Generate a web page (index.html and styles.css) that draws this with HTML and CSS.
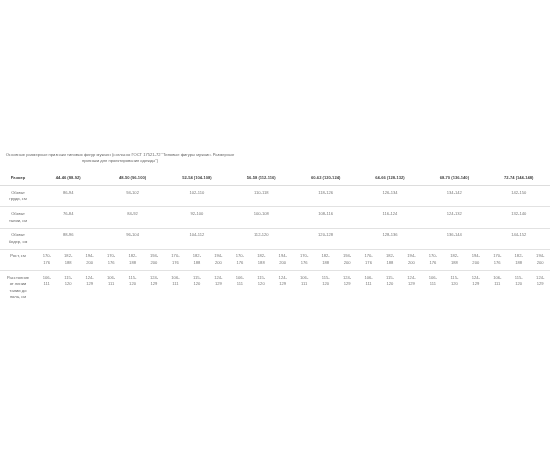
FILE: index.html
```html
<!DOCTYPE html>
<html lang="ru">
<head>
<meta charset="utf-8">
<link rel="stylesheet" href="styles.css">
</head>
<body>
<div class="page">
  <p class="caption">Основные размерные признаки типовых фигур мужчин (согласно ГОСТ 17521-72 "Типовые фигуры мужчин. Размерные<br>признаки для проектирования одежды")</p>
  <table class="sizes">
    <colgroup>
      <col class="c-label">
      <col span="24" class="c-sub">
    </colgroup>
    <thead>
      <tr>
        <th class="label">Размер</th>
        <th colspan="3">44-46 (88-92)</th>
        <th colspan="3">48-50 (96-100)</th>
        <th colspan="3">52-54 (104-108)</th>
        <th colspan="3">56-58 (112-116)</th>
        <th colspan="3">60-62 (120-124)</th>
        <th colspan="3">64-66 (128-132)</th>
        <th colspan="3">68-70 (136-140)</th>
        <th colspan="3">72-74 (144-148)</th>
      </tr>
    </thead>
    <tbody>
      <tr>
        <td class="label">Обхват<br>груди, см</td>
        <td colspan="3">86-94</td>
        <td colspan="3">94-102</td>
        <td colspan="3">102-110</td>
        <td colspan="3">110-118</td>
        <td colspan="3">118-126</td>
        <td colspan="3">126-134</td>
        <td colspan="3">134-142</td>
        <td colspan="3">142-150</td>
      </tr>
      <tr>
        <td class="label">Обхват<br>талии, см</td>
        <td colspan="3">76-84</td>
        <td colspan="3">84-92</td>
        <td colspan="3">92-100</td>
        <td colspan="3">100-108</td>
        <td colspan="3">108-116</td>
        <td colspan="3">116-124</td>
        <td colspan="3">124-132</td>
        <td colspan="3">132-140</td>
      </tr>
      <tr>
        <td class="label">Обхват<br>бедер, см</td>
        <td colspan="3">88-96</td>
        <td colspan="3">96-104</td>
        <td colspan="3">104-112</td>
        <td colspan="3">112-120</td>
        <td colspan="3">120-128</td>
        <td colspan="3">128-136</td>
        <td colspan="3">136-144</td>
        <td colspan="3">144-152</td>
      </tr>
      <tr>
        <td class="label">Рост, см</td>
        <td>170-<br>176</td><td>182-<br>188</td><td>194-<br>200</td>
        <td>170-<br>176</td><td>182-<br>188</td><td>194-<br>200</td>
        <td>170-<br>176</td><td>182-<br>188</td><td>194-<br>200</td>
        <td>170-<br>176</td><td>182-<br>188</td><td>194-<br>200</td>
        <td>170-<br>176</td><td>182-<br>188</td><td>194-<br>200</td>
        <td>170-<br>176</td><td>182-<br>188</td><td>194-<br>200</td>
        <td>170-<br>176</td><td>182-<br>188</td><td>194-<br>200</td>
        <td>170-<br>176</td><td>182-<br>188</td><td>194-<br>200</td>
      </tr>
      <tr>
        <td class="label">Расстояние<br>от линии<br>талии до<br>пола, см</td>
        <td>106-<br>111</td><td>115-<br>120</td><td>124-<br>129</td>
        <td>106-<br>111</td><td>115-<br>120</td><td>124-<br>129</td>
        <td>106-<br>111</td><td>115-<br>120</td><td>124-<br>129</td>
        <td>106-<br>111</td><td>115-<br>120</td><td>124-<br>129</td>
        <td>106-<br>111</td><td>115-<br>120</td><td>124-<br>129</td>
        <td>106-<br>111</td><td>115-<br>120</td><td>124-<br>129</td>
        <td>106-<br>111</td><td>115-<br>120</td><td>124-<br>129</td>
        <td>106-<br>111</td><td>115-<br>120</td><td>124-<br>129</td>
      </tr>
    </tbody>
  </table>
</div>
</body>
</html>
```
FILE: styles.css
```css
html, body {
  margin: 0;
  padding: 0;
  background: #ffffff;
}

body {
  font-family: "Liberation Sans", Arial, sans-serif;
  color: #777777;
}

.page {
  padding-top: 152px;
  width: 550px;
  will-change: transform;
}

.caption {
  width: 240px;
  margin: 0 0 7px 0;
  font-size: 4.1px;
  line-height: 6.3px;
  text-align: center;
  white-space: nowrap;
  color: #666666;
}

.sizes {
  width: 551px;
  table-layout: fixed;
  border-collapse: collapse;
  border-spacing: 0;
  font-size: 4.1px;
  line-height: 6.5px;
}

.c-label {
  width: 36px;
}

.sizes th,
.sizes td {
  padding: 3.6px 2px;
  text-align: center;
  vertical-align: top;
}

.sizes th {
  font-weight: bold;
  color: #444444;
  border-bottom: 1px solid #dddddd;
}

.sizes td {
  border-top: 1px solid #e2e2e2;
  color: #777777;
}

.sizes tbody tr:first-child td {
  border-top: none;
}

.sizes td.label {
  color: #666666;
}
```
